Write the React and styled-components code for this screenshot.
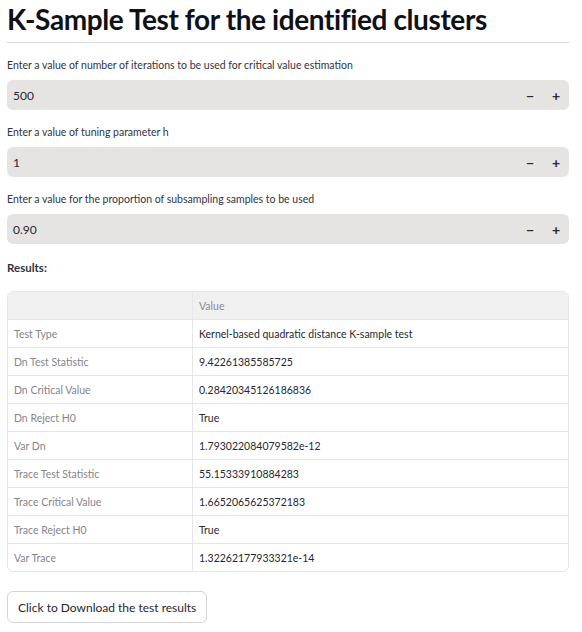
import React from 'react';
import styled, { createGlobalStyle } from 'styled-components';

const GlobalStyle = createGlobalStyle`
  body {
    margin: 0;
    background: #ffffff;
    font-family: Lato, "Noto Sans", sans-serif;
    color: #31333f;
  }
`;

const Page = styled.div`
  padding: 0 13px 0 7px;
  display: flex;
  flex-direction: column;
`;

const Title = styled.h1`
  margin: 0;
  padding: 2px 0 6px;
  font-size: 28px;
  line-height: 34px;
  font-weight: 700;
  color: #0e1117;
  letter-spacing: -0.4px;
  border-bottom: 1px solid #d9d9de;
`;

const Field = styled.div`
  display: flex;
  flex-direction: column;
  margin-top: 15px;
`;

const Label = styled.label`
  font-size: 10.5px;
  color: #31333f;
  height: 14px;
  line-height: 14px;
  margin-bottom: 8px;
`;

const NumberBox = styled.div`
  display: flex;
  align-items: center;
  height: 30px;
  background: #e5e4e2;
  border-radius: 6px;
  padding: 0 0 0 6px;
  font-size: 12px;
  color: #262730;
`;

const Value = styled.span`
  flex: 1;
`;

const StepButton = styled.span`
  width: 26px;
  text-align: center;
  font-size: 14px;
  font-weight: 700;
  color: #262730;
`;

const Heading = styled.div`
  margin-top: 17px;
  font-size: 11.5px;
  font-weight: 700;
  color: #31333f;
`;

const TableWrap = styled.div`
  margin-top: 17px;
  border: 1px solid #e6e6e8;
  border-radius: 6px;
  overflow: hidden;
`;

const Grid = styled.table`
  width: 100%;
  border-collapse: collapse;
  font-size: 10.5px;
`;

const HeadCell = styled.th`
  height: 27px;
  background: #f0f0f0;
  color: #8a8a90;
  font-weight: 400;
  text-align: left;
  padding: 0 6px;
  border-bottom: 1px solid #e6e6e8;
  border-left: ${p => p.$first ? 'none' : '1px solid #e6e6e8'};
  width: ${p => p.$first ? '172px' : 'auto'};
`;

const Row = styled.tr`
  & + & td {
    border-top: 1px solid #e6e6e8;
  }
`;

const KeyCell = styled.td`
  height: 27px;
  padding: 0 6px;
  color: #85858c;
`;

const ValCell = styled.td`
  height: 27px;
  padding: 0 6px;
  color: #262730;
  border-left: 1px solid #e6e6e8;
`;

const Download = styled.button`
  align-self: flex-start;
  margin-top: 19px;
  height: 32px;
  padding: 0 10px;
  background: #ffffff;
  border: 1px solid #d3d3d8;
  border-radius: 6px;
  font-family: inherit;
  font-size: 12px;
  color: #262730;
`;

const fields = [
  { label: 'Enter a value of number of iterations to be used for critical value estimation', value: '500' },
  { label: 'Enter a value of tuning parameter h', value: '1' },
  { label: 'Enter a value for the proportion of subsampling samples to be used', value: '0.90' },
];

const results = [
  ['Test Type', 'Kernel-based quadratic distance K-sample test'],
  ['Dn Test Statistic', '9.42261385585725'],
  ['Dn Critical Value', '0.28420345126186836'],
  ['Dn Reject H0', 'True'],
  ['Var Dn', '1.793022084079582e-12'],
  ['Trace Test Statistic', '55.15333910884283'],
  ['Trace Critical Value', '1.6652065625372183'],
  ['Trace Reject H0', 'True'],
  ['Var Trace', '1.32262177933321e-14'],
];

export default function App() {
  return (
    <Page>
      <GlobalStyle />
      <Title>K-Sample Test for the identified clusters</Title>
      {fields.map((f, i) => (
        <Field key={i}>
          <Label>{f.label}</Label>
          <NumberBox>
            <Value>{f.value}</Value>
            <StepButton>−</StepButton>
            <StepButton>+</StepButton>
          </NumberBox>
        </Field>
      ))}
      <Heading>Results:</Heading>
      <TableWrap>
        <Grid>
          <thead>
            <tr>
              <HeadCell $first></HeadCell>
              <HeadCell>Value</HeadCell>
            </tr>
          </thead>
          <tbody>
            {results.map(([k, v]) => (
              <Row key={k}>
                <KeyCell>{k}</KeyCell>
                <ValCell>{v}</ValCell>
              </Row>
            ))}
          </tbody>
        </Grid>
      </TableWrap>
      <Download>Click to Download the test results</Download>
    </Page>
  );
}
